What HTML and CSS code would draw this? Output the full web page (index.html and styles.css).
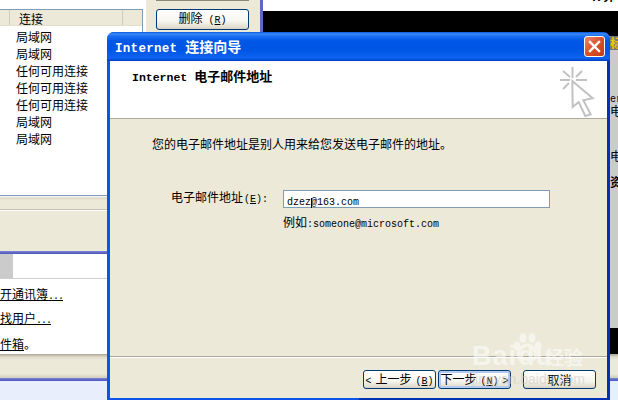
FILE: index.html
```html
<!DOCTYPE html>
<html lang="zh-CN">
<head>
<meta charset="utf-8">
<title>Internet 连接向导</title>
<link rel="stylesheet" href="styles.css">
</head>
<body>
<div class="desk">
  <div class="win-list">
    <div class="list-pane">
      <div class="list-head"><span class="head-cell">连接</span></div>
      <ul class="rows">
        <li>局域网</li>
        <li>局域网</li>
        <li>任何可用连接</li>
        <li>任何可用连接</li>
        <li>任何可用连接</li>
        <li>局域网</li>
        <li>局域网</li>
      </ul>
    </div>
    <div class="list-band"><div class="band-line"></div></div>
    <div class="blue-edge"></div>
  </div>

  <div class="win-buttons">
    <div class="top-rule"></div>
    <button class="xp-btn delete-btn">删除<span class="lat"> (<u>R</u>)</span></button>
  </div>

  <div class="black-bar"></div>
  <div class="top-glyph">K 算</div>

  <div class="win-start">
    <div class="tab-row"><div class="tab"></div></div>
    <div class="links">
      <a class="link link-a">开通讯簿<span class="lat dots">...</span></a>
      <a class="link link-b">找用户<span class="lat dots">...</span></a>
      <p class="link-c"><a class="link">件箱</a>。</p>
    </div>
    <div class="status"></div>
    <div class="blue-edge"></div>
    <div class="tray"></div>
  </div>

  <div class="strip">
    <div class="strip-title">标</div>
    <div class="strip-body">
      <div class="s1 lat">er</div>
      <div class="s2">电</div>
      <div class="s3">电</div>
      <div class="s4">资</div>
    </div>
    <div class="strip-black"></div>
  </div>

  <section class="dialog">
    <header class="titlebar">
      <h1 class="title"><span class="title-lat">Internet </span>连接向导</h1>
      <div class="close">
        <svg width="13" height="13" viewBox="0 0 13 13"><path d="M2 2 L11 11 M11 2 L2 11" stroke="#fff" stroke-width="2.4" stroke-linecap="square" fill="none"/></svg>
      </div>
    </header>
    <div class="client">
      <div class="wiz-head">
        <h2 class="wiz-title"><span class="wiz-lat">Internet </span>电子邮件地址</h2>
        <svg class="wiz-icon" width="38" height="54" viewBox="0 0 38 54">
          <g stroke="#c2c2c2" stroke-width="2" fill="none">
            <path d="M14.500 2V13M2 15H12M18 15H29M5 6L12 12M24 6L18 12M5 24L11 18"/>
            <path d="M14.300 16L34.700 33.300L25.300 35.300L32.700 49.300L27.300 51L20.700 37L14.700 42Z" fill="#fff"/>
          </g>
        </svg>
      </div>
      <div class="wiz-body">
        <p class="intro">您的电子邮件地址是别人用来给您发送电子邮件的地址。</p>
        <div class="field">
          <label class="field-label">电子邮件地址<span class="lat"> (<u>E</u>):</span></label>
          <div class="input"><span class="lat">dzez<span class="at">@</span>163.com</span></div>
        </div>
        <p class="example">例如<span class="lat">:someone@microsoft.com</span></p>
      </div>
      <footer class="wiz-foot">
        <button class="xp-btn step"><span class="lat">&lt; </span>上一步<span class="lat"> (<u>B</u>)</span></button>
        <button class="xp-btn step default">下一步<span class="lat"> (<u>N</u>) &gt;</span></button>
        <button class="xp-btn cancel">取消</button>
      </footer>
    </div>
    <div class="watermark">
      <div class="wm-logo">
        <span class="wm-word">Bai<span class="wm-du">du</span></span>
        <svg class="wm-paw" width="34" height="30" viewBox="0 0 34 30">
          <g fill="#fff">
            <ellipse cx="7" cy="14" rx="3.500" ry="4.500"/>
            <ellipse cx="13" cy="6" rx="3.500" ry="5"/>
            <ellipse cx="22" cy="6" rx="3.500" ry="5"/>
            <ellipse cx="28" cy="14" rx="3.500" ry="4.500"/>
          </g>
          <path d="M17 13c-5 0-9 6-9 10 0 4 4 5 9 4 5 1 9 0 9-4 0-4-4-10-9-10z" fill="none" stroke="#fff" stroke-width="3"/>
        </svg>
        <span class="wm-cn">经验</span>
      </div>
      <div class="wm-url">jingyan.baidu.com</div>
    </div>
  </section>
</div>
</body>
</html>
```
FILE: styles.css
```css
* { box-sizing: border-box; }
html, body { margin: 0; padding: 0; }
body { background: #fff; font: 12px/16px "Noto Sans CJK SC", "Liberation Sans", sans-serif; color: #000; }
h1, h2, p, ul { margin: 0; padding: 0; }
.lat { font-family: "Liberation Mono", "DejaVu Sans Mono", monospace; font-size: 10px; white-space: pre; }

.desk { position: relative; width: 618px; height: 400px; overflow: hidden; background: #fff; }

/* background windows */
.win-list { position: absolute; left: 0; top: 9px; width: 143px; height: 245px; display: flex; flex-direction: column; }
.list-pane { height: 187px; border-top: 1px solid #7f9db9; border-right: 1px solid #7f9db9; border-bottom: 1px solid #7f9db9; background: #fff; }
.list-head { height: 16px; background: #ece9d8; padding-left: 9px; border-bottom: 1px solid #e2dfcf; }
.head-cell { display: block; width: 114px; height: 15px; padding-left: 9px; line-height: 17px; border-left: 1px solid #cfccb9; border-right: 1px solid #cfccb9; }
.rows { list-style: none; padding: 2px 0 0 16px; }
.rows li { height: 17px; line-height: 17px; }
.list-band { flex: 1; background: linear-gradient(#fff, #d9d6c6 2px, #ece9d8 4px); padding-top: 13px; }
.band-line { height: 2px; background: #c4c1b0; border-bottom: 1px solid #fff; }
.blue-edge { height: 3px; background: linear-gradient(#7c85d6, #4a55b8); flex: none; }

.win-buttons { position: absolute; left: 146px; top: 0; width: 117px; height: 60px; background: #ece9d8; border-right: 3px solid #5a68c8; padding: 0 11px 0 10px; }
.top-rule { height: 1px; background: #8a8878; margin-bottom: 8px; }
.delete-btn { display: block; width: 93px; }
.black-bar { position: absolute; left: 263px; top: 11px; right: 0; height: 25px; background: #000; }
.top-glyph { position: absolute; left: 592px; top: -12px; font-size: 12px; font-weight: 700; }

.win-start { position: absolute; left: 0; top: 254px; width: 618px; height: 146px; display: flex; flex-direction: column; background: #fff; }
.tab-row { height: 25px; border-bottom: 1px solid #cfcfcf; }
.tab { width: 13px; height: 24px; background: #cbcbcb; }
.links { height: 75px; padding-top: 7px; }
.link { display: block; width: max-content; height: 16px; color: #000; text-decoration: underline; line-height: 16px; }
.dots { letter-spacing: -1px; }
.link-b { margin-top: 8px; }
.link-c { margin-top: 10px; display: flex; height: 16px; }
.status { height: 24px; background: linear-gradient(#a9a694, #dedbca 3px, #ece9d8 6px, #ece9d8 20px, #cfccba); }
.tray { flex: 1; background: #e8eefb; }

.strip { position: absolute; left: 610px; top: 36px; width: 8px; height: 318px; display: flex; flex-direction: column; overflow: hidden; background: #cbcbcb; }
.strip-title { height: 14px; background: #787878; color: #f5c400; font-weight: 700; line-height: 14px; white-space: nowrap; }
.strip-body { flex: 1; position: relative; white-space: nowrap; line-height: 14px; }
.s1 { margin-top: 45px; height: 9px; line-height: 9px; display: block; }
.s2 { height: 14px; }
.s3 { margin-top: 31px; height: 14px; }
.s4 { margin-top: 12px; font-weight: 700; }
.strip-black { height: 26px; background: #000; flex: none; }

/* dialog */
.dialog { position: absolute; left: 107px; top: 32px; width: 503px; height: 368px; display: flex; flex-direction: column; border-radius: 7px 7px 0 0; overflow: hidden; background: linear-gradient(90deg, #0c55e8 50%, #0033b4 50%); }
.titlebar { height: 29px; flex: none; display: flex; align-items: center; justify-content: space-between; padding: 0 5px 0 8px;
  background: linear-gradient(#0a56dc 0, #3a8cf6 2px, #1c6ef2 4px, #0057e6 9px, #0055e5 18px, #0a62ee 25px, #0a5ce8 27px, #0038c0 29px); }
.title { font: 700 14px/16px "Noto Sans CJK SC", sans-serif; color: #fff; white-space: pre; }
.title-lat { font: 700 12.500px "Liberation Mono", monospace; letter-spacing: .3px; }
.close { width: 21px; height: 21px; display: flex; align-items: center; justify-content: center; border: 1px solid #fff; border-radius: 3px; background: linear-gradient(135deg, #ea8a6c, #d8522a 50%, #c23a10); }

.client { flex: 1; margin: 0 3px 2px; display: flex; flex-direction: column; background: #ece9d8; }
.wiz-head { height: 58px; flex: none; background: #fff; border-bottom: 1px solid #aca899; display: flex; justify-content: space-between; align-items: flex-start; padding: 6px 11px 0 22px; }
.wiz-title { font: 700 13px/17px "Noto Sans CJK SC", sans-serif; white-space: pre; }
.wiz-lat { font: 700 11.500px "Liberation Mono", monospace; }
.wiz-icon { margin-top: -2px; }
.wiz-body { flex: 1; padding: 17px 0 0 42px; }
.field { display: flex; align-items: center; margin: 37px 0 0 19px; }
.field-label { width: 112px; white-space: pre; word-spacing: -5px; }
.input { width: 267px; height: 18px; border: 1px solid #7f9db9; background: #fff; padding-left: 3px; line-height: 17px; }
.at { position: relative; }
.at::after { content: ""; position: absolute; left: 0; top: 1px; width: 2px; height: 10px; border-left: 1px solid #000; }
.example { margin: 6px 0 0 131px; height: 16px; }
.wiz-foot { flex: none; height: 42px; border-top: 1px solid #aca899; box-shadow: inset 0 1px 0 #fff; display: flex; padding: 13px 11px 0 253px; align-items: flex-start; }
.xp-btn { height: 19px; padding: 0; font: 12px/16px "Noto Sans CJK SC", sans-serif; color: #000; white-space: nowrap; border: 1px solid #003c74; border-radius: 3px; background: linear-gradient(#fff, #f6f5ef 60%, #e2dfd0 90%, #d6d0c5); }
.delete-btn { height: 21px; }
.step { width: 73px; word-spacing: -2px; }
.default { margin-left: 2px; box-shadow: inset 0 0 0 2px #b4caf0; }
.cancel { width: 73px; margin-left: 12px; }

/* watermark */
.watermark { position: absolute; left: 365px; top: 298px; width: 125px; color: #fff; opacity: .55; pointer-events: none; }
.wm-logo { position: relative; height: 40px; }
.wm-word { position: absolute; left: 0; top: 11px; font: 700 27px/30px "Liberation Sans", sans-serif; letter-spacing: 1px; }
.wm-du { margin-left: 1px; }
.wm-paw { position: absolute; left: 38px; top: 2px; }
.wm-cn { position: absolute; left: 73px; top: 15px; font: 700 19px/24px "Noto Sans CJK SC", sans-serif; }
.wm-url { font: 14px/16px "Liberation Sans", sans-serif; color: #c9c9c2; margin-top: 1px; white-space: nowrap; }
```
